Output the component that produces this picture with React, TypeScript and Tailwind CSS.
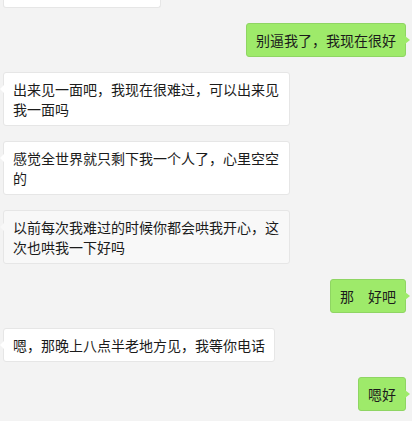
import React from "react";

type Msg = { text: string; mine: boolean; dim?: boolean };

const messages: Msg[] = [
  { text: "别逼我了，我现在很好", mine: true },
  { text: "出来见一面吧，我现在很难过，可以出来见我一面吗", mine: false },
  { text: "感觉全世界就只剩下我一个人了，心里空空的", mine: false },
  { text: "以前每次我难过的时候你都会哄我开心，这次也哄我一下好吗", mine: false, dim: true },
  { text: "那\u3000好吧", mine: true },
  { text: "嗯，那晚上八点半老地方见，我等你电话", mine: false },
  { text: "嗯好", mine: true },
];

const Bubble = ({ text, mine, dim }: Msg) => {
  if (mine) {
    return (
      <div className="flex justify-end">
        <div className="relative max-w-[287px] rounded-[3px] border border-[#8fd563] bg-[#9eea6a] px-[9px] py-[6px] text-[14px] leading-[20px] text-[#1b1b1b]">
          {text}
          {/* tail */}
          <span className="absolute top-[12px] -right-[5px] h-0 w-0 border-y-[4px] border-l-[5px] border-y-transparent border-l-[#9eea6a]" />
        </div>
      </div>
    );
  }
  return (
    <div className="flex justify-start">
      <div
        className={`relative max-w-[287px] rounded-[3px] border border-[#e6e6e6] px-[9px] py-[6px] text-[14px] leading-[20px] text-[#1b1b1b] ${
          dim ? "bg-[#f8f8f8]" : "bg-white"
        }`}
      >
        {text}
        <span
          className={`absolute top-[12px] -left-[4px] h-0 w-0 border-y-[4px] border-r-[4px] border-y-transparent ${
            dim ? "border-r-[#f8f8f8]" : "border-r-white"
          }`}
        />
      </div>
    </div>
  );
};

export default function App() {
  return (
    <div
      className="h-[421px] w-full overflow-hidden bg-[#f3f3f3] pl-[3px] pr-[6px]"
      style={{ fontFamily: '"Noto Sans CJK SC", "Noto Sans", sans-serif' }}
    >
      <div className="flex flex-col gap-[15px]">
        {/* bottom edge of the previous message, scrolled off */}
        <div className="flex justify-start">
          <div className="h-[8px] w-[158px] rounded-b-[3px] border-x border-b border-[#e6e6e6] bg-white" />
        </div>
        {messages.map((m, i) => (
          <Bubble key={i} {...m} />
        ))}
      </div>
    </div>
  );
}
